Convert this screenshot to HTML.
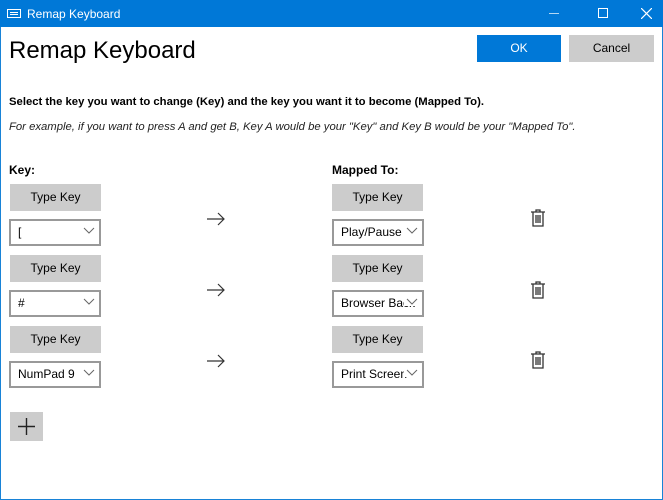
<!DOCTYPE html>
<html><head><style>
*{margin:0;padding:0;box-sizing:border-box}
body{width:663px;height:500px;background:#fff;font-family:"Liberation Sans",sans-serif;position:relative;overflow:hidden;border:1px solid #1883d7}
.a{position:absolute}
.tb{left:-1px;top:-1px;width:663px;height:27px;background:#0078d7;color:#fff;font-size:12px}
.btn{position:absolute;background:#ccc;font-size:12px;color:#000;text-align:center;line-height:27px;width:91px;height:27px}
.dd{position:absolute;width:92px;height:27px;border:2px solid #999;font-size:12px;line-height:23px;padding-left:7px;white-space:nowrap;overflow:hidden;background:#fff}
.dd svg{position:absolute;right:2px;top:6px;background:#fff;padding:0 2px;box-sizing:content-box}
.arr{position:absolute;left:205px;width:20px;height:14px}
.tr{position:absolute;left:530px;width:14px;height:18px}
</style></head><body>
<div class="a tb">
 <svg class="a" style="left:7px;top:9px" width="14" height="9"><rect x="0.5" y="0.5" width="13" height="8" fill="none" stroke="#fff"/><rect x="3" y="3" width="8" height="1" fill="#fff"/><rect x="3" y="5" width="8" height="1" fill="#fff"/></svg>
 <div class="a" style="left:27px;top:7px">Remap Keyboard</div>
 <div class="a" style="left:549px;top:13px;width:10px;height:1px;background:#fff;opacity:.7"></div>
 <div class="a" style="left:598px;top:8px;width:10px;height:10px;border:1px solid #fff"></div>
 <svg class="a" style="left:641px;top:8px" width="11" height="11"><path d="M0 0L11 11M11 0L0 11" stroke="#fff" stroke-width="1.2"/></svg>
</div>
<div class="a" style="left:8px;top:36px;font-size:24px;color:#000">Remap Keyboard</div>
<div class="a" style="left:476px;top:34px;width:84px;height:27px;background:#0078d7;color:#fff;font-size:12px;text-align:center;line-height:27px">OK</div>
<div class="a" style="left:568px;top:34px;width:85px;height:27px;background:#ccc;font-size:12px;text-align:center;line-height:27px">Cancel</div>
<div class="a" style="left:8px;top:95px;font-size:11.3px;font-weight:bold">Select the key you want to change (Key) and the key you want it to become (Mapped To).</div>
<div class="a" style="left:8px;top:120px;font-size:11.3px;font-style:italic;color:#222">For example, if you want to press A and get B, Key A would be your "Key" and Key B would be your "Mapped To".</div>
<div class="a" style="left:8px;top:162px;font-size:12px;font-weight:bold">Key:</div>
<div class="a" style="left:331px;top:162px;font-size:12px;font-weight:bold">Mapped To:</div>

<div class="btn" style="left:9px;top:183px">Type Key</div>
<div class="dd" style="left:8px;top:218px">[<svg width="12" height="8"><path d="M1 1L6 6L11 1" fill="none" stroke="#666"/></svg></div>
<div class="btn" style="left:9px;top:254px">Type Key</div>
<div class="dd" style="left:8px;top:289px">#<svg width="12" height="8"><path d="M1 1L6 6L11 1" fill="none" stroke="#666"/></svg></div>
<div class="btn" style="left:9px;top:325px">Type Key</div>
<div class="dd" style="left:8px;top:360px">NumPad 9<svg width="12" height="8"><path d="M1 1L6 6L11 1" fill="none" stroke="#666"/></svg></div>

<div class="btn" style="left:331px;top:183px">Type Key</div>
<div class="dd" style="left:331px;top:218px">Play/Pause<svg width="12" height="8"><path d="M1 1L6 6L11 1" fill="none" stroke="#666"/></svg></div>
<div class="btn" style="left:331px;top:254px">Type Key</div>
<div class="dd" style="left:331px;top:289px">Browser Back<svg width="12" height="8"><path d="M1 1L6 6L11 1" fill="none" stroke="#666"/></svg></div>
<div class="btn" style="left:331px;top:325px">Type Key</div>
<div class="dd" style="left:331px;top:360px">Print Screen<svg width="12" height="8"><path d="M1 1L6 6L11 1" fill="none" stroke="#666"/></svg></div>

<svg class="arr" style="top:211px" viewBox="0 0 20 14"><path d="M1 7H18M12 1L18 7L12 13" fill="none" stroke="#333" stroke-width="1.2"/></svg>
<svg class="arr" style="top:282px" viewBox="0 0 20 14"><path d="M1 7H18M12 1L18 7L12 13" fill="none" stroke="#333" stroke-width="1.2"/></svg>
<svg class="arr" style="top:353px" viewBox="0 0 20 14"><path d="M1 7H18M12 1L18 7L12 13" fill="none" stroke="#333" stroke-width="1.2"/></svg>

<svg class="tr" style="top:208px" viewBox="0 0 14 18"><path d="M0 3H14M5 3V1H9V3M2 3V17H12V3M5 6V14M7 6V14M9 6V14" fill="none" stroke="#333" stroke-width="1.3"/></svg>
<svg class="tr" style="top:280px" viewBox="0 0 14 18"><path d="M0 3H14M5 3V1H9V3M2 3V17H12V3M5 6V14M7 6V14M9 6V14" fill="none" stroke="#333" stroke-width="1.3"/></svg>
<svg class="tr" style="top:350px" viewBox="0 0 14 18"><path d="M0 3H14M5 3V1H9V3M2 3V17H12V3M5 6V14M7 6V14M9 6V14" fill="none" stroke="#333" stroke-width="1.3"/></svg>

<div class="a" style="left:9px;top:411px;width:33px;height:29px;background:#ccc"></div>
<svg class="a" style="left:16px;top:416px" width="19" height="19"><path d="M9.5 1V18M1 9.5H18" stroke="#222" stroke-width="1.4"/></svg>
</body></html>
